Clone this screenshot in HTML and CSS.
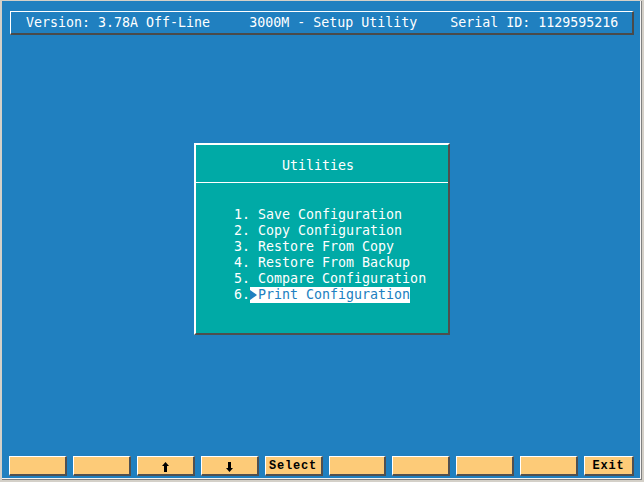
FILE: index.html
```html
<!DOCTYPE html>
<html lang="en">
<head>
    <meta charset="UTF-8">
    <title>3000M - Setup Utility</title>
    <link rel="stylesheet" href="styles.css">
</head>
<body>
    <div class="frame">
        <div class="screen">
            <header class="status">
                <span>Version: 3.78A Off-Line</span>
                <span class="title">3000M - Setup Utility</span>
                <span class="serial">Serial ID: 1129595216</span>
            </header>

            <div class="dialog">
                <div class="dialog-title">Utilities</div>
                <ul class="menu">
                    <li><span class="num">1.</span> Save Configuration</li>
                    <li><span class="num">2.</span> Copy Configuration</li>
                    <li><span class="num">3.</span> Restore From Copy</li>
                    <li><span class="num">4.</span> Restore From Backup</li>
                    <li><span class="num">5.</span> Compare Configuration</li>
                    <li><span class="num">6.</span><span class="selected"><span class="arrow"></span>Print Configuration</span></li>
                </ul>
            </div>

            <div class="keys">
                <button class="key"></button>
                <button class="key"></button>
                <button class="key" title="Up">
                    <svg class="key-icon" width="7" height="10" viewBox="0 0 7 10"><path d="M3.5 0 L7 4 L5 4 L5 10 L2 10 L2 4 L0 4 Z" fill="#000"/></svg>
                </button>
                <button class="key" title="Down">
                    <svg class="key-icon" width="7" height="10" viewBox="0 0 7 10"><path d="M3.5 10 L7 6 L5 6 L5 0 L2 0 L2 6 L0 6 Z" fill="#000"/></svg>
                </button>
                <button class="key">Select</button>
                <button class="key"></button>
                <button class="key"></button>
                <button class="key"></button>
                <button class="key"></button>
                <button class="key key-last">Exit</button>
            </div>
        </div>
    </div>
</body>
</html>
```

FILE: styles.css
```css
body {
    margin: 0;
    background-color: #d4d0c8;
    height: 482px;
    overflow: hidden;
    font-family: "DejaVu Sans Mono", "Liberation Mono", monospace;
}
.frame {
    margin-left: 2px;
    margin-top: 1px;
    width: 639px;
    border-right: 1px solid #808080;
    border-bottom: 1px solid #808080;
}
.screen {
    background-color: #2080c0;
    width: 624px;
    height: 467px;
    padding: 10px 6px 0 8px;
    border-right: 1px solid #f4f4f4;
    border-bottom: 1px solid #f4f4f4;
    color: #fff;
}
.status {
    display: flex;
    height: 21px;
    line-height: 21px;
    font-size: 13.3px;
    padding-left: 15px;
    border-top: 1px solid #fff;
    border-left: 1px solid #fff;
    border-right: 2px solid #4a4a4a;
    border-bottom: 2px solid #4a4a4a;
    white-space: pre;
}
.status .title {
    margin-left: 39px;
}
.status .serial {
    margin-left: 33px;
}
.dialog {
    margin-top: 108px;
    margin-left: 184px;
    width: 252px;
    height: 188px;
    background-color: #00aaa6;
    border-top: 2px solid #fff;
    border-left: 2px solid #fff;
    border-right: 2px solid #4e4e4e;
    border-bottom: 2px solid #4e4e4e;
    font-size: 13.3px;
}
.dialog-title {
    height: 16px;
    line-height: 16px;
    padding: 13px 0 8px 86px;
    border-bottom: 1px solid #fff;
}
.menu {
    list-style: none;
    margin: 0;
    padding: 24px 0 0 38px;
}
.menu li {
    height: 16px;
    line-height: 16px;
    white-space: pre;
}
.selected {
    display: inline-block;
    background-color: #fff;
    color: #2080c0;
    height: 16px;
    vertical-align: top;
}
.arrow {
    display: inline-block;
    width: 8px;
    height: 16px;
    vertical-align: top;
    position: relative;
}
.arrow::before {
    content: "";
    position: absolute;
    left: 0;
    top: 3px;
    border-left: 7px solid #2080c0;
    border-top: 5px solid transparent;
    border-bottom: 5px solid transparent;
}
.keys {
    display: flex;
    gap: 6px;
    margin-top: 121px;
    margin-left: -1px;
}
.key {
    width: 58px;
    height: 20px;
    padding: 1px 0 0;
    margin: 0;
    background-color: #fdcb78;
    border-top: 1px solid #fff;
    border-left: 1px solid #fff;
    border-right: 2px solid #505050;
    border-bottom: 2px solid #505050;
    border-radius: 0;
    font-family: "Liberation Mono", "DejaVu Sans Mono", monospace;
    font-weight: bold;
    font-size: 12px;
    letter-spacing: 0.8px;
    line-height: 15px;
    color: #000;
    text-align: center;
}
.key-icon {
    display: block;
    margin: 2px auto 0;
}
.key-last {
    width: 50px;
}
```
